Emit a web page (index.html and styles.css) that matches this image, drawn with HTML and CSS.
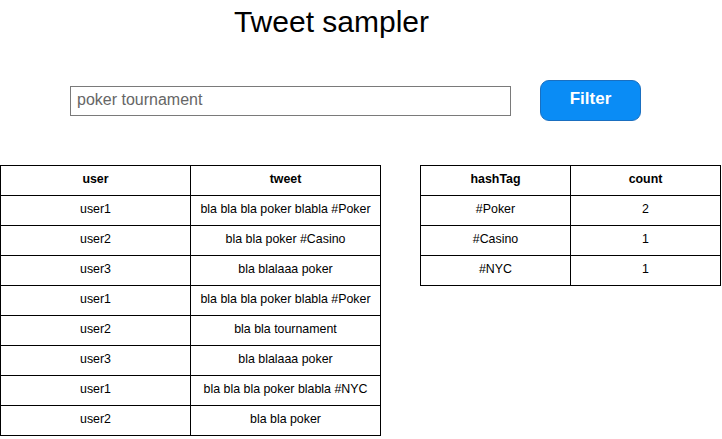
FILE: index.html
```html
<!DOCTYPE html>
<html>
<head>
<meta charset="utf-8">
<link rel="stylesheet" href="styles.css">
</head>
<body>
<div class="page">
  <h1 class="title">Tweet sampler</h1>
  <div class="search">
    <div class="input">poker tournament</div>
    <button class="btn">Filter</button>
  </div>
  <div class="tables">
    <table class="grid tweets">
      <tr><th>user</th><th>tweet</th></tr>
      <tr><td>user1</td><td>bla bla bla poker blabla #Poker</td></tr>
      <tr><td>user2</td><td>bla bla poker #Casino</td></tr>
      <tr><td>user3</td><td>bla blalaaa poker</td></tr>
      <tr><td>user1</td><td>bla bla bla poker blabla #Poker</td></tr>
      <tr><td>user2</td><td>bla bla tournament</td></tr>
      <tr><td>user3</td><td>bla blalaaa poker</td></tr>
      <tr><td>user1</td><td>bla bla bla poker blabla #NYC</td></tr>
      <tr><td>user2</td><td>bla bla poker</td></tr>
    </table>
    <table class="grid tags">
      <tr><th>hashTag</th><th>count</th></tr>
      <tr><td>#Poker</td><td>2</td></tr>
      <tr><td>#Casino</td><td>1</td></tr>
      <tr><td>#NYC</td><td>1</td></tr>
    </table>
  </div>
</div>
</body>
</html>
```
FILE: styles.css
```css
html, body {
  margin: 0;
  padding: 0;
  background: #ffffff;
}
.page {
  width: 722px;
  font-family: "Liberation Sans", Arial, sans-serif;
  color: #000;
}
.title {
  margin: 0;
  width: 663px;
  text-align: center;
  font-weight: normal;
  font-size: 30px;
  line-height: 44px;
  height: 44px;
}
.search {
  display: flex;
  align-items: center;
  margin-top: 36px;
  padding-left: 70px;
  height: 41px;
}
.input {
  box-sizing: border-box;
  width: 441px;
  height: 30px;
  border: 1px solid #7a7a7a;
  padding-left: 6px;
  font-size: 16px;
  line-height: 25px;
  color: #666666;
}
.btn {
  box-sizing: border-box;
  margin-left: 29px;
  width: 101px;
  height: 41px;
  border: 1px solid #1a6fc0;
  border-radius: 9px;
  background: #0a8cf5;
  color: #ffffff;
  font-family: "Liberation Sans", Arial, sans-serif;
  font-weight: bold;
  font-size: 17px;
  padding: 0 0 4px 0;
}
.tables {
  display: flex;
  align-items: flex-start;
  margin-top: 44px;
  gap: 39px;
}
.grid {
  border-collapse: collapse;
  font-size: 12.4px;
}
.grid th, .grid td {
  border: 1px solid #000;
  height: 26px;
  padding: 0 0 3px 0;
  text-align: center;
  vertical-align: middle;
}
.grid th {
  font-weight: bold;
}
.tweets th, .tweets td {
  width: 189px;
}
.tags th, .tags td {
  width: 149px;
}
```
